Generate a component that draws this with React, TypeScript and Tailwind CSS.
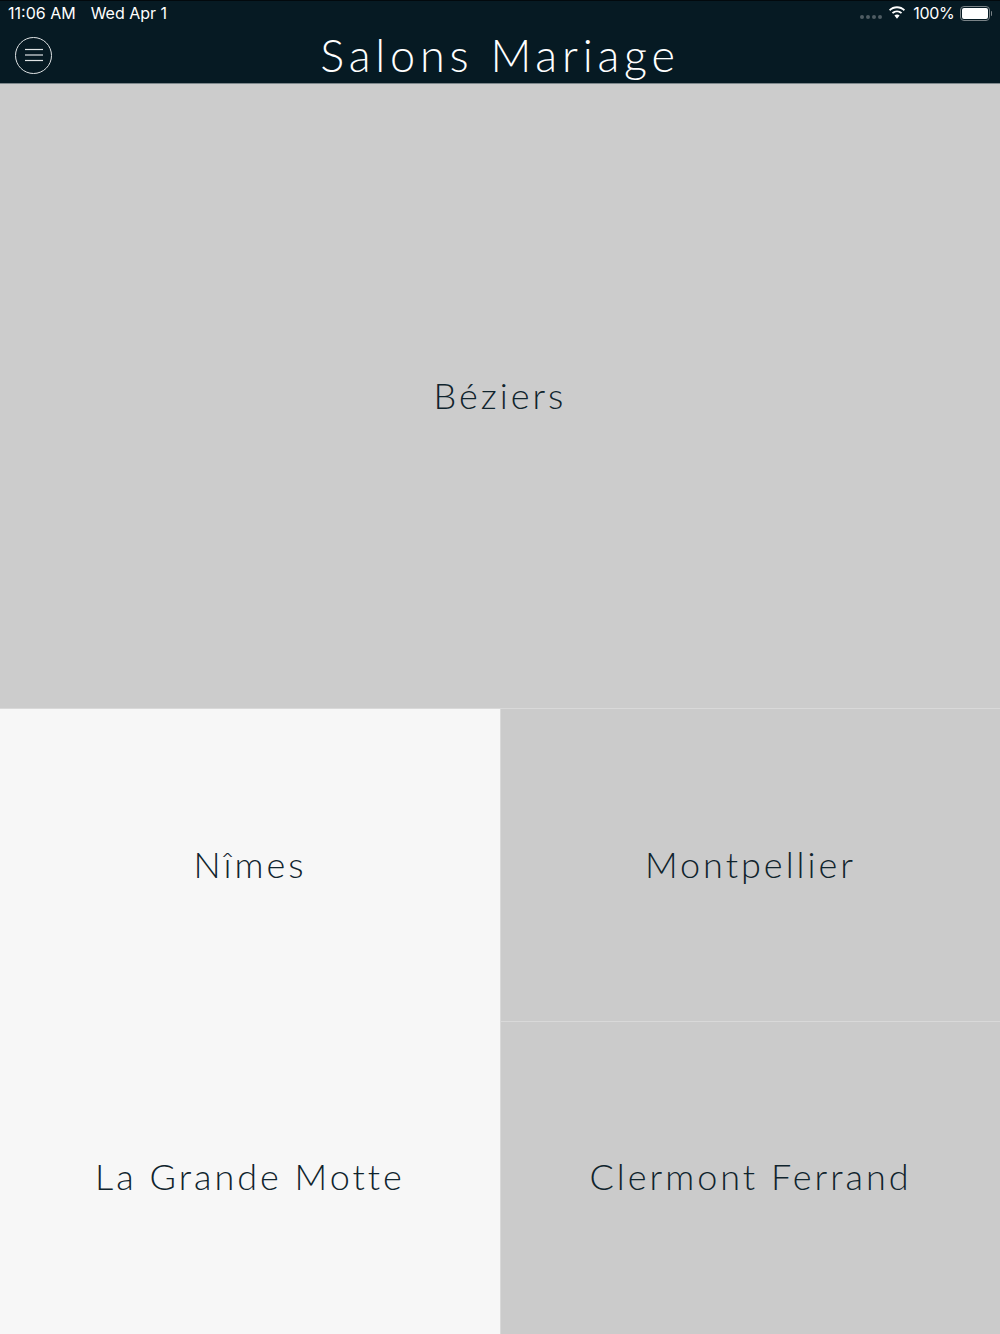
function Wifi() {
    return (
        <svg width="18" height="14" viewBox="0 0 18 14" fill="white">
            <path d="M9 2.200c2.600 0 5 1 6.800 2.700l1.200-1.300C14.900 1.500 12.100.3 9 .3S3.100 1.500 1 3.600l1.200 1.300C4 3.200 6.400 2.200 9 2.200z" />
            <path d="M9 6.300c1.500 0 2.900.6 3.900 1.500l1.300-1.300C12.800 5.200 11 4.400 9 4.400s-3.800.8-5.200 2.100l1.300 1.300c1-.9 2.400-1.500 3.900-1.500z" />
            <path d="M9 8.500c-1 0-1.900.4-2.600 1L9 12.800l2.600-3.300c-.7-.6-1.600-1-2.600-1z" />
        </svg>
    )
}

function MenuLines() {
    return (
        <svg width="20" height="14" viewBox="0 0 20 14" fill="none" stroke="#dfe3e4" strokeWidth="1.2">
            <line x1="1" y1="1.500" x2="19" y2="1.500" />
            <line x1="1" y1="7" x2="19" y2="7" />
            <line x1="1" y1="12.500" x2="19" y2="12.500" />
        </svg>
    )
}

function Battery() {
    return (
        <div className="flex items-center gap-[1px]">
            <div className="w-[30px] h-[15px] rounded-[4px] border border-[#7a8387] p-[1px]">
                <div className="w-full h-full bg-white rounded-[2px]" />
            </div>
            <div className="w-[1.5px] h-[5px] bg-[#7a8387] rounded-r-sm" />
        </div>
    )
}

function StatusBar() {
    return (
        <div className="h-[26px] flex items-center justify-between pl-[8px] pr-[8px] pb-[2px] text-white text-[16px] font-['Inter',sans-serif]">
            <div className="flex gap-[15px]">
                <span>11:06 AM</span>
                <span>Wed Apr 1</span>
            </div>
            <div className="flex items-center">
                <div className="flex gap-[2px] mr-[6px] mt-[8px]">
                    <div className="w-[4px] h-[4px] rounded-full bg-[#4f5c63]" />
                    <div className="w-[4px] h-[4px] rounded-full bg-[#4f5c63]" />
                    <div className="w-[4px] h-[4px] rounded-full bg-[#4f5c63]" />
                    <div className="w-[4px] h-[4px] rounded-full bg-[#4f5c63]" />
                </div>
                <Wifi />
                <span className="ml-[7px] mr-[5px] tracking-[-0.3px]">100%</span>
                <Battery />
            </div>
        </div>
    )
}

function Tile({ name, className }: { name: string, className: string }) {
    return (
        <div className={`flex-1 flex items-center justify-center ${className}`}>
            <span className="text-[36px] leading-none font-light tracking-[3px] text-[#10242d]">{ name }</span>
        </div>
    )
}

function App() {
    return (
        <div className="w-[1000px] h-[1334px] flex flex-col overflow-hidden font-['Lato',sans-serif]">
            <header className="h-[84px] bg-[#061a23] border-t border-t-[#02090d] border-b border-b-[#7d878b]">
                <StatusBar />
                <div className="grid grid-cols-[1fr_auto_1fr] items-center h-[56px]">
                    <button className="ml-[15px] w-[37px] h-[37px] rounded-full border border-[#dfe3e4] flex items-center justify-center">
                        <MenuLines />
                    </button>
                    <h1 className="text-[45px] leading-none font-light tracking-[4.800px] text-white mt-[1px]">Salons Mariage</h1>
                    <div />
                </div>
            </header>

            <main className="flex-1 flex flex-col">
                <div className="h-[625px] flex bg-[#cccccc] border-b border-[#d9d9d9]">
                    <Tile name="Béziers" className="bg-[#cccccc] pb-[2px]" />
                </div>
                <div className="flex-1 flex">
                    <div className="w-[500px] flex flex-col">
                        <Tile name="Nîmes" className="bg-[#f7f7f7] pb-[2px]" />
                        <Tile name="La Grande Motte" className="bg-[#f7f7f7] pb-[3px]" />
                    </div>
                    <div className="flex-1 flex flex-col border-l border-[#d9d9d9]">
                        <div className="flex-1 flex border-b border-[#d9d9d9]">
                            <Tile name="Montpellier" className="bg-[#cbcbcb] pb-[2px]" />
                        </div>
                        <div className="flex-1 flex">
                            <Tile name="Clermont Ferrand" className="bg-[#cbcbcb] pb-[4px]" />
                        </div>
                    </div>
                </div>
            </main>
        </div>
    )
}

export default App
